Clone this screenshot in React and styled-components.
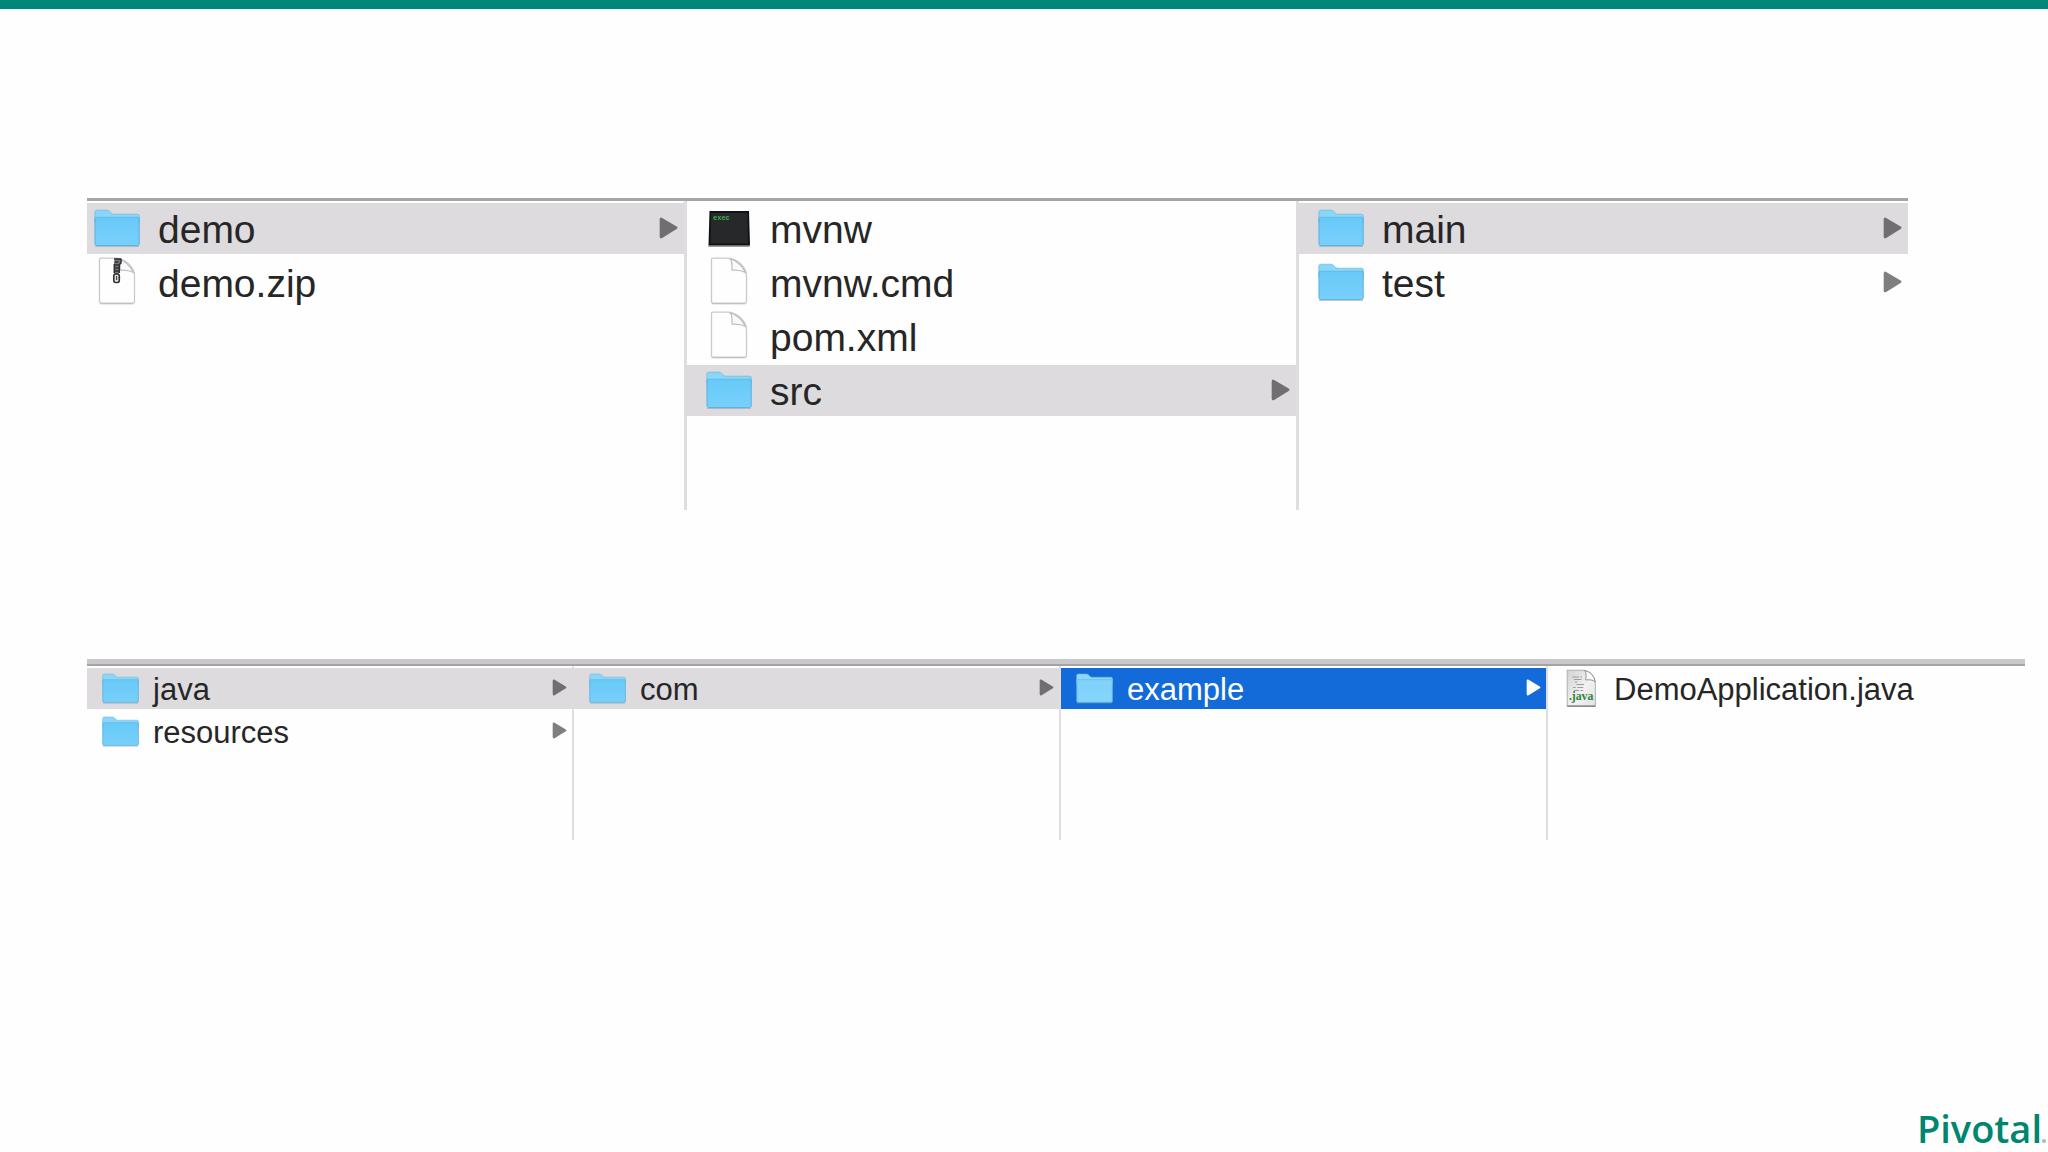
import React from "react";
import styled, { createGlobalStyle, css } from "styled-components";

const GlobalStyle = createGlobalStyle`
  *, *::before, *::after { box-sizing: border-box; }
  body {
    margin: 0;
    background: #fefefe;
    font-family: "Liberation Sans", Arial, Helvetica, sans-serif;
  }
`;

const Page = styled.div`
  display: flex;
  flex-direction: column;
  min-height: 100vh;
  border-top: 9px solid #00877a;
`;

const Slide = styled.main`
  display: flex;
  flex-direction: column;
  flex: 1;
  gap: 154px;
  padding: 189px 0 0 87px;
`;

const sizes = {
  large: css`
    --row: 51px;
    --row-gap: 3px;
    --icon-w: 46px;
    --icon-h: 48px;
    --arrow: 19px;
    --arrow-h: 22px;
    --text: 39px;
    --label-gap: 18px;
    --pad: 19px;
    --pad-first: 7px;
    --pad-end: 6px;
    --rule: 3px;
    min-height: 312px;
    margin-right: 140px;
    border-top: 3px solid #a7a4a8;
    grid-template-columns: 597fr 612fr 612fr;
  `,
  small: css`
    --row: 41px;
    --row-gap: 2px;
    --icon-w: 37px;
    --icon-h: 39px;
    --arrow: 15px;
    --arrow-h: 17px;
    --text: 31px;
    --label-gap: 14px;
    --pad: 15px;
    --pad-first: 15px;
    --pad-end: 5px;
    --rule: 2px;
    min-height: 176px;
    margin-right: 23px;
    border-top: 2px solid #a5a3a6;
    box-shadow: 0 -5px 0 #cac8cb;
    grid-template-columns: 485fr 487fr 487fr 479fr;
  `,
};

const Browser = styled.section`
  display: grid;
  ${(p) => sizes[p.$size]}
`;

const Column = styled.ul`
  display: flex;
  flex-direction: column;
  gap: var(--row-gap);
  min-width: 0;
  margin: 0;
  padding: 2px 0 0;
  list-style: none;
  border-left: var(--rule) solid #dfdde1;
  --indent: var(--pad);

  &:first-child {
    border-left: 0;
    --indent: var(--pad-first);
  }
`;

const tones = {
  plain: css`
    color: #262627;
    background: transparent;
  `,
  path: css`
    color: #262627;
    background: #dddbde;
  `,
  active: css`
    color: #fefefe;
    background: #126bd8;
  `,
};

const Item = styled.li`
  display: flex;

  ${Column}:not(:first-child) > & {
    margin-left: ${(p) => (p.$tone === "path" ? "calc(0px - var(--rule))" : "0")};
    --shift: ${(p) => (p.$tone === "path" ? "var(--rule)" : "0px")};
  }
`;

const Row = styled.button`
  display: flex;
  flex: 1;
  align-items: flex-start;
  gap: var(--label-gap);
  min-width: 0;
  height: var(--row);
  margin: 0;
  padding: 0 var(--pad-end) 0 calc(var(--indent) + var(--shift, 0px));
  border: 0;
  font-family: inherit;
  font-size: var(--text);
  line-height: calc(var(--row) + 2px);
  text-align: left;
  cursor: default;
  ${(p) => tones[p.$tone]}
`;

const Label = styled.span`
  flex: 1;
  white-space: nowrap;
`;

const IconSvg = styled.svg`
  flex: none;
  width: var(--icon-w);
  height: var(--icon-h);
`;

const ArrowSvg = styled.svg`
  flex: none;
  align-self: center;
  width: var(--arrow);
  height: var(--arrow-h);
  margin-bottom: 2px;
  fill: ${(p) => (p.$tone === "active" ? "#fefefe" : p.$tone === "path" ? "#706e71" : "#807e81")};
`;

const Footer = styled.footer`
  display: flex;
  justify-content: flex-end;
  align-items: flex-end;
  padding: 0 2px 0 0;
`;

const Brand = styled.span`
  font-family: "Open Sans", "Noto Sans", sans-serif;
  font-size: 38px;
  font-weight: 600;
  line-height: 48px;
  color: #00856f;
`;

const Mark = styled.span`
  width: 4px;
  height: 4px;
  margin: 0 0 9px;
  border-radius: 50%;
  background: #b3b8b7;
`;

function FolderIcon({ selected }) {
  return (
    <IconSvg viewBox="0 0 46 48" aria-hidden="true">
      <defs>
        <linearGradient id={selected ? "folderSel" : "folder"} x1="0" y1="0" x2="0" y2="1">
          <stop offset="0" stopColor={selected ? "#80d2fb" : "#68c9f8"} />
          <stop offset="1" stopColor={selected ? "#85d5fc" : "#78d0fb"} />
        </linearGradient>
      </defs>
      <path d="M1 43.5h44" stroke="#7d8f9b" strokeOpacity=".45" strokeWidth="1.2" />
      <path
        d="M.8 9.2Q.8 7.2 2.8 7.2H13q1.4 0 2.3.9l2.6 2.5q.7.6 1.8.6H43.4q2 0 2 2V20H.8z"
        fill={selected ? "#8fd7fa" : "#8ad6f8"}
        stroke="#69b9df"
        strokeWidth=".7"
      />
      <path
        d="M.8 14.3H45.4V40.8q0 2-2 2H2.800q-2 0-2-2z"
        fill={selected ? "url(#folderSel)" : "url(#folder)"}
      />
      <path d="M1 14.3H45.2" stroke="#5fb9e4" strokeWidth=".9" />
      <path d="M1 15V40.800q0 1.700 1.800 1.700H43.400q1.800 0 1.800-1.700V15" fill="none" stroke="#5aaedb" strokeWidth=".9" />
    </IconSvg>
  );
}

function Sheet() {
  return (
    <>
      <path
        d="M6.500 1.200H21.500C30 1.200 40.500 9.500 40.500 19V44.500q0 1.700-1.700 1.700H7.200q-1.700 0-1.700-1.700V2.700Q5.500 1.200 7 1.200z"
        fill="#fefefe"
        stroke="#cbc9cb"
        strokeWidth="1.3"
      />
      <path d="M6.5 46.8H39.5" stroke="#b5b3b5" strokeWidth=".9" />
      <path d="M24 1.700C26.500 4 26.300 8 26 13.200c5-.4 10 .3 13.500 2.300C37 9.500 30.500 3.500 24 1.700z" fill="#fafafa" stroke="#c0bec0" strokeWidth="1.2" />
    </>
  );
}

function FileIcon() {
  return (
    <IconSvg viewBox="0 0 46 48" aria-hidden="true">
      <Sheet />
    </IconSvg>
  );
}

function ZipIcon() {
  return (
    <IconSvg viewBox="0 0 46 48" aria-hidden="true">
      <Sheet />
      <path d="M20.500 1.500h6.500v4l-2 3v8l-1 2h-3l-1-2V8z" fill="#77767a" />
      <path d="M20 2h7.500M27 2.500v3.500l-2 2M20.500 5h4M20 8h5.500M20 11h5.500M20 14h5.500M20.300 7v9M25.300 8v8" stroke="#303033" strokeWidth="1.500" fill="none" />
      <rect x="19.800" y="17" width="5.500" height="8.500" rx="2" fill="#e4e4e4" stroke="#2f2f32" strokeWidth="1.600" />
      <path d="M22.600 19v4" stroke="#4a4a4d" strokeWidth="1.300" />
    </IconSvg>
  );
}

const TinyMono = styled.text`
  font-family: "Liberation Mono", monospace;
  font-size: 7px;
  font-weight: 700;
  fill: #3fae55;
`;

const TinySerif = styled.text`
  font-family: "Liberation Serif", serif;
  font-size: 14px;
  font-weight: 700;
  fill: #2d8238;
`;

function TerminalIcon() {
  return (
    <IconSvg viewBox="0 0 46 48" aria-hidden="true">
      <path d="M2.500 43.300h41" stroke="#9a9a9a" strokeWidth="1.5" />
      <path d="M3.500 8H43L44 42.500H2.500z" fill="#111213" />
      <path d="M5 10H41.500L42 40.500H4.500z" fill="#272829" />
      <TinyMono x="7" y="17">exec</TinyMono>
    </IconSvg>
  );
}

function JavaIcon() {
  return (
    <IconSvg viewBox="1 -1 44 46" aria-hidden="true">
      <defs>
        <linearGradient id="javaSheet" x1="0" y1="0" x2="1" y2="1">
          <stop offset="0" stopColor="#d2d2d2" />
          <stop offset=".55" stopColor="#f1f1f1" />
          <stop offset="1" stopColor="#e3e3e3" />
        </linearGradient>
      </defs>
      <path d="M6 1.500H26Q39.500 5 39.500 19V44H6z" fill="url(#javaSheet)" stroke="#b1b1b1" strokeWidth="1.2" />
      <path d="M6 44.200H39.500" stroke="#7f7f7f" strokeWidth="1.600" />
      <path d="M27 1.800C29 5 28.500 9 28 13c5-.5 9 0 11.200 2.500C38.500 8.500 33.500 3.500 27 1.800z" fill="#fafafa" stroke="#8e8e8e" strokeWidth="1.100" />
      <path
        d="M12 9.500h8M21.500 9.500h2M14 12.500h9M15 15.500h3M17 18.500h9M13 22h3M18 22h7M14 25.500h6M22 25.500h3"
        stroke="#9c9c9c"
        strokeWidth="1.2"
      />
      <TinySerif x="8" y="37">.java</TinySerif>
    </IconSvg>
  );
}

function Arrow({ tone }) {
  return (
    <ArrowSvg $tone={tone} viewBox="0 0 19 22" aria-hidden="true">
      <path d="M.7 2.500Q.7-.3 3.200 1L17.600 9.600q1.800 1.200 0 2.500L3.200 20.900Q.7 22.200.7 19.400z" />
    </ArrowSvg>
  );
}

const icons = {
  folder: FolderIcon,
  file: FileIcon,
  zip: ZipIcon,
  terminal: TerminalIcon,
  java: JavaIcon,
};

const project = [
  [
    { name: "demo", icon: "folder", tone: "path" },
    { name: "demo.zip", icon: "zip" },
  ],
  [
    { name: "mvnw", icon: "terminal" },
    { name: "mvnw.cmd", icon: "file" },
    { name: "pom.xml", icon: "file" },
    { name: "src", icon: "folder", tone: "path" },
  ],
  [
    { name: "main", icon: "folder", tone: "path" },
    { name: "test", icon: "folder" },
  ],
];

const sources = [
  [
    { name: "java", icon: "folder", tone: "path" },
    { name: "resources", icon: "folder" },
  ],
  [{ name: "com", icon: "folder", tone: "path" }],
  [{ name: "example", icon: "folder", tone: "active" }],
  [{ name: "DemoApplication.java", icon: "java" }],
];

function Entry({ name, icon, tone = "plain" }) {
  const Icon = icons[icon];
  return (
    <Item $tone={tone}>
      <Row type="button" $tone={tone}>
        <Icon selected={tone === "active"} />
        <Label>{name}</Label>
        {icon === "folder" && <Arrow tone={tone} />}
      </Row>
    </Item>
  );
}

function ColumnBrowser({ size, columns, label }) {
  return (
    <Browser $size={size} aria-label={label}>
      {columns.map((entries) => (
        <Column key={entries[0].name}>
          {entries.map((entry) => (
            <Entry key={entry.name} {...entry} />
          ))}
        </Column>
      ))}
    </Browser>
  );
}

export default function App() {
  return (
    <Page>
      <GlobalStyle />
      <Slide>
        <ColumnBrowser size="large" columns={project} label="Project files" />
        <ColumnBrowser size="small" columns={sources} label="Source files" />
      </Slide>
      <Footer>
        <Brand>Pivotal</Brand>
        <Mark />
      </Footer>
    </Page>
  );
}
